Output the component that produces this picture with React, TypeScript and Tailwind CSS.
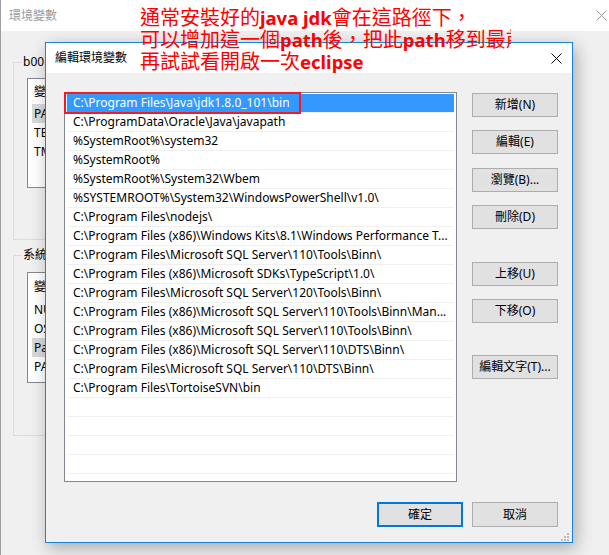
import React from "react";

const paths: string[] = [
  "C:\\Program Files\\Java\\jdk1.8.0_101\\bin",
  "C:\\ProgramData\\Oracle\\Java\\javapath",
  "%SystemRoot%\\system32",
  "%SystemRoot%",
  "%SystemRoot%\\System32\\Wbem",
  "%SYSTEMROOT%\\System32\\WindowsPowerShell\\v1.0\\",
  "C:\\Program Files\\nodejs\\",
  "C:\\Program Files (x86)\\Windows Kits\\8.1\\Windows Performance T...",
  "C:\\Program Files\\Microsoft SQL Server\\110\\Tools\\Binn\\",
  "C:\\Program Files (x86)\\Microsoft SDKs\\TypeScript\\1.0\\",
  "C:\\Program Files\\Microsoft SQL Server\\120\\Tools\\Binn\\",
  "C:\\Program Files (x86)\\Microsoft SQL Server\\110\\Tools\\Binn\\Man...",
  "C:\\Program Files (x86)\\Microsoft SQL Server\\110\\Tools\\Binn\\",
  "C:\\Program Files (x86)\\Microsoft SQL Server\\110\\DTS\\Binn\\",
  "C:\\Program Files\\Microsoft SQL Server\\110\\DTS\\Binn\\",
  "C:\\Program Files\\TortoiseSVN\\bin",
  "",
  "",
  "",
  "",
];

function CloseX({ color }: { color: string }) {
  return (
    <svg width="11" height="11" viewBox="0 0 11 11">
      <path d="M0.5 0.5 L10.5 10.5 M10.5 0.5 L0.5 10.5" stroke={color} strokeWidth="1" fill="none" />
    </svg>
  );
}

function Btn({ label, className = "" }: { label: string; className?: string }) {
  return (
    <div
      className={`w-[86px] h-[24px] flex items-center justify-center bg-[#e1e1e1] border border-[#adadad] text-[12px] text-black ${className}`}
    >
      {label}
    </div>
  );
}

function OuterList({
  rows,
  height,
  headerH,
  selected,
}: {
  rows: string[];
  height: string;
  headerH: string;
  selected: number;
}) {
  return (
    <div className={`ml-[13px] ${height} w-[18px] border border-r-0 border-[#828790] bg-white flex flex-col overflow-hidden whitespace-nowrap`}>
      <div className={`${headerH} flex items-center pl-[6px]`}>變數</div>
      {rows.map((r, i) => (
        <div
          key={i}
          className={`h-[19px] flex items-center pl-[2px] ml-[4px] ${i === selected ? "bg-[#d9d9d9]" : ""}`}
        >
          {r}
        </div>
      ))}
    </div>
  );
}

export default function App() {
  return (
    <div className="relative w-[609px] h-[555px] overflow-hidden bg-[#f0f0f0] text-[12px] text-black [font-family:'Noto_Sans','Noto_Sans_CJK_TC',sans-serif]">
      {/* Outer window */}
      <div className="flex flex-col h-full border-l border-[#a0a0a0]">
        <div className="h-[31px] bg-white flex items-center justify-between pl-[8px] pr-[2px]">
          <span className="text-[#9a9a9a]">環境變數</span>
          <CloseX color="#9a9a9a" />
        </div>
        <div className="flex flex-col pl-[12px]">
          <div className="relative mt-[31px] w-[520px] h-[178px] border border-[#dcdcdc] pt-[15px]">
            <span className="absolute -top-[9px] left-[8px] bg-[#f0f0f0] px-[1px] leading-[16px] w-[23px] overflow-hidden whitespace-nowrap">b00</span>
            <OuterList rows={["PATH", "TEMP", "TMP"]} height="h-[110px]" headerH="h-[25px]" selected={0} />
          </div>
          <div className="relative mt-[15px] w-[520px] h-[181px] border border-[#dcdcdc] pt-[16px]">
            <span className="absolute -top-[9px] left-[8px] bg-[#f0f0f0] px-[1px] leading-[16px] w-[23px] overflow-hidden whitespace-nowrap">系統變數</span>
            <OuterList rows={["NUMBER", "OS", "Path", "PATHEXT"]} height="h-[111px]" headerH="h-[27px]" selected={2} />
          </div>
        </div>
      </div>

      {/* Edit dialog */}
      <div className="absolute left-[45px] top-[42px] w-[528px] h-[501px] border border-[#1883d7] bg-[#f0f0f0] shadow-[3px_5px_16px_rgba(0,0,0,0.3)] flex flex-col">
        <div className="h-[30px] bg-white flex items-center justify-between pl-[9px] pr-[10px]">
          <span>編輯環境變數</span>
          <CloseX color="#000000" />
        </div>
        <div className="flex pl-[18px] pt-[19px]">
          <div className="w-[393px] h-[390px] border border-[#828790] bg-white pt-[1px] px-[2px] overflow-hidden">
            {paths.map((p, i) => (
              <div
                key={i}
                className={`h-[19px] border-b border-[#f0f0f0] flex items-center pl-[6px] whitespace-nowrap overflow-hidden ${
                  i === 0 ? "bg-[#3399ff] text-white" : "text-black"
                }`}
              >
                {p}
              </div>
            ))}
          </div>
          <div className="flex flex-col ml-[15px]">
            <Btn label="新增(N)" className="mt-[1px]" />
            <Btn label="編輯(E)" className="mt-[13px]" />
            <Btn label="瀏覽(B)..." className="mt-[14px]" />
            <Btn label="刪除(D)" className="mt-[13px]" />
            <Btn label="上移(U)" className="mt-[33px]" />
            <Btn label="下移(O)" className="mt-[13px]" />
            <Btn label="編輯文字(T)..." className="mt-[32px]" />
          </div>
        </div>
        <div className="flex justify-end gap-[9px] pr-[14px] mt-[20px]">
          <div className="w-[86px] h-[25px] flex items-center justify-center bg-[#e1e1e1] border-2 border-[#0078d7]">確定</div>
          <div className="w-[86px] h-[25px] flex items-center justify-center bg-[#e1e1e1] border border-[#adadad]">取消</div>
        </div>
        <svg className="absolute right-[3px] bottom-[1px]" width="8" height="8" viewBox="0 0 8 8">
          <rect x="6" y="0" width="2" height="2" fill="#bcbcbc" />
          <rect x="3" y="3" width="2" height="2" fill="#bcbcbc" />
          <rect x="6" y="3" width="2" height="2" fill="#bcbcbc" />
          <rect x="0" y="6" width="2" height="2" fill="#bcbcbc" />
          <rect x="3" y="6" width="2" height="2" fill="#bcbcbc" />
          <rect x="6" y="6" width="2" height="2" fill="#bcbcbc" />
        </svg>
      </div>

      {/* Red highlight box */}
      <div className="absolute left-[64px] top-[92px] w-[237px] h-[22px] border-2 border-[#ee1c24]" />

      {/* Annotation */}
      <div className="absolute left-[140px] top-[7px] w-[371px] overflow-hidden whitespace-nowrap text-[#ff0000] text-[20px] leading-[22px]">
        <div>
          通常安裝好的<b className="font-bold text-[18.5px]">java jdk</b>會在這路徑下，
        </div>
        <div>
          可以增加這一個<b className="font-bold text-[18.5px]">path</b>後，把此<b className="font-bold text-[18.5px]">path</b>移到最前
        </div>
        <div>
          再試試看開啟一次<b className="font-bold text-[18.5px]">eclipse</b>
        </div>
      </div>
    </div>
  );
}
